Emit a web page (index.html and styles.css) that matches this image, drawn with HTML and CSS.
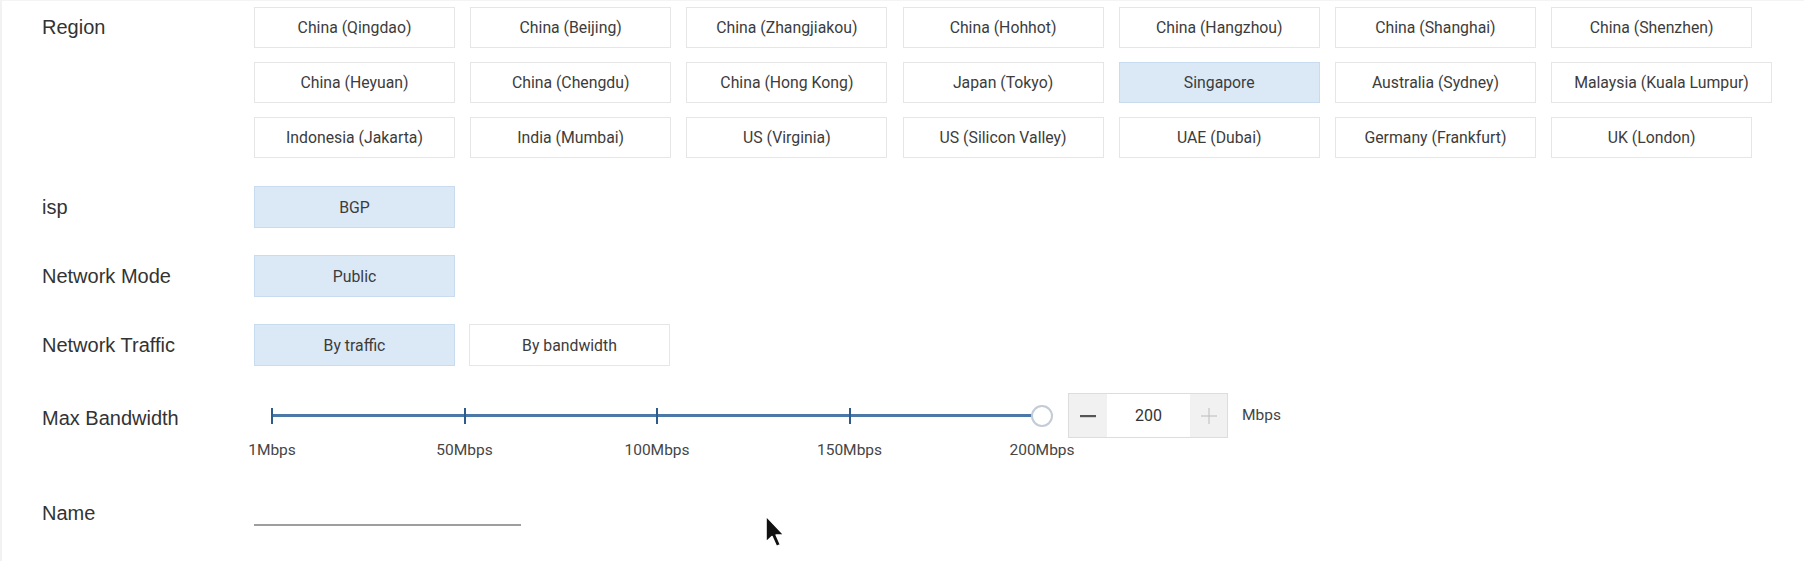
FILE: index.html
```html
<!DOCTYPE html>
<html>
<head>
<meta charset="utf-8">
<link rel="stylesheet" href="styles.css">
</head>
<body>
<div class="page">
  <div class="row row-region">
    <div class="label">Region</div>
    <div class="region-grid">
      <button class="opt">China (Qingdao)</button>
      <button class="opt">China (Beijing)</button>
      <button class="opt">China (Zhangjiakou)</button>
      <button class="opt">China (Hohhot)</button>
      <button class="opt">China (Hangzhou)</button>
      <button class="opt">China (Shanghai)</button>
      <button class="opt">China (Shenzhen)</button>
      <button class="opt">China (Heyuan)</button>
      <button class="opt">China (Chengdu)</button>
      <button class="opt">China (Hong Kong)</button>
      <button class="opt">Japan (Tokyo)</button>
      <button class="opt sel">Singapore</button>
      <button class="opt">Australia (Sydney)</button>
      <button class="opt">Malaysia (Kuala Lumpur)</button>
      <button class="opt">Indonesia (Jakarta)</button>
      <button class="opt">India (Mumbai)</button>
      <button class="opt">US (Virginia)</button>
      <button class="opt">US (Silicon Valley)</button>
      <button class="opt">UAE (Dubai)</button>
      <button class="opt">Germany (Frankfurt)</button>
      <button class="opt">UK (London)</button>
    </div>
  </div>

  <div class="row row-single row-isp">
    <div class="label label-tall">isp</div>
    <div class="opts"><button class="opt opt-tall sel">BGP</button></div>
  </div>

  <div class="row row-single">
    <div class="label label-tall">Network Mode</div>
    <div class="opts"><button class="opt opt-tall sel">Public</button></div>
  </div>

  <div class="row row-single">
    <div class="label label-tall">Network Traffic</div>
    <div class="opts">
      <button class="opt opt-tall sel">By traffic</button>
      <button class="opt opt-tall">By bandwidth</button>
    </div>
  </div>

  <div class="row row-bw">
    <div class="label label-bw">Max Bandwidth</div>
    <div class="bw">
      <div class="slider">
        <div class="slider-bar">
          <div class="tick"><span class="mark"></span></div>
          <div class="tick"><span class="mark"></span></div>
          <div class="tick"><span class="mark"></span></div>
          <div class="tick"><span class="mark"></span></div>
          <div class="tick"><span class="handle"></span></div>
        </div>
        <div class="slider-labels">
          <div class="tick"><span class="tlabel">1Mbps</span></div>
          <div class="tick"><span class="tlabel">50Mbps</span></div>
          <div class="tick"><span class="tlabel">100Mbps</span></div>
          <div class="tick"><span class="tlabel">150Mbps</span></div>
          <div class="tick"><span class="tlabel">200Mbps</span></div>
        </div>
      </div>
      <div class="stepper">
        <div class="step-btn step-minus">
          <svg width="18" height="18" viewBox="0 0 18 18"><rect x="1" y="8" width="16" height="2.2" fill="#555"/></svg>
        </div>
        <div class="step-val">200</div>
        <div class="step-btn step-plus">
          <svg width="18" height="18" viewBox="0 0 18 18"><rect x="1" y="8.4" width="16" height="1.2" fill="#c4c4c4"/><rect x="8.4" y="1" width="1.2" height="16" fill="#c4c4c4"/></svg>
        </div>
      </div>
      <span class="unit">Mbps</span>
    </div>
  </div>

  <div class="row row-name">
    <div class="label label-name">Name</div>
    <div class="name-input"></div>
  </div>

  <svg class="cursor" width="22" height="34" viewBox="0 0 22 34">
    <path d="M2 1 L2 27 L8 21.5 L12.5 31.5 L16.5 29.8 L12.2 20 L20 20 Z" fill="#111" stroke="#fff" stroke-width="1.6" stroke-linejoin="round"/>
  </svg>
</div>
</body>
</html>
```

FILE: styles.css
```css
html, body {
  margin: 0;
  padding: 0;
  background: #ffffff;
}

body {
  font-family: Roboto, "Liberation Sans", sans-serif;
  color: #333333;
}

.page {
  position: relative;
  box-sizing: border-box;
  width: 1804px;
  height: 561px;
  overflow: hidden;
  padding: 6px 0 0 40px;
  border-left: 2px solid #f2f2f2;
  border-top: 1px solid #f4f4f4;
}

.row {
  display: flex;
  align-items: flex-start;
}

.label {
  width: 212px;
  flex: none;
  font-family: "Liberation Sans", Arial, sans-serif;
  font-size: 20px;
  color: #333333;
  line-height: 41px;
  white-space: nowrap;
}

.label-tall {
  line-height: 42px;
}

.region-grid {
  display: grid;
  grid-template-columns: repeat(7, 201px);
  column-gap: 15.2px;
  row-gap: 14px;
}

.opt {
  box-sizing: border-box;
  justify-self: start;
  min-width: 201px;
  height: 41px;
  padding: 0 22px;
  margin: 0;
  border: 1px solid #e6e6e6;
  background: #ffffff;
  font-family: Roboto, "Liberation Sans", sans-serif;
  font-size: 15.8px;
  color: #3c3c3c;
  white-space: nowrap;
  text-align: center;
  cursor: pointer;
}

.opt-tall {
  height: 42px;
}

.opt.sel {
  background: #dbe9f7;
  border-color: #c9dbee;
}

.opts {
  display: flex;
  gap: 14px;
}

.row-isp {
  margin-top: 29px;
}

.row-single {
  margin-top: 27px;
}

.row-isp.row-single {
  margin-top: 28px;
}

/* bandwidth */
.row-bw {
  margin-top: 27px;
}

.label-bw {
  line-height: 50px;
}

.bw {
  display: flex;
  align-items: flex-start;
}

.slider {
  width: 770px;
  margin-left: 18px;
}

.slider-bar {
  height: 45px;
  display: flex;
  align-items: center;
  justify-content: space-between;
  background: linear-gradient(#4b78a8, #4b78a8) center / 100% 3px no-repeat;
}

.tick {
  width: 0;
  display: flex;
  justify-content: center;
  align-items: center;
}

.mark {
  flex: none;
  width: 2px;
  height: 16px;
  background: #2d5b8d;
}

.handle {
  flex: none;
  box-sizing: border-box;
  width: 22px;
  height: 22px;
  border-radius: 50%;
  border: 2px solid #c3cbd6;
  background: #ffffff;
}

.slider-labels {
  display: flex;
  justify-content: space-between;
  margin-top: 3px;
}

.tlabel {
  flex: none;
  font-family: Roboto, "Liberation Sans", sans-serif;
  font-size: 15.5px;
  line-height: 18px;
  color: #454545;
  white-space: nowrap;
}

.stepper {
  display: flex;
  box-sizing: border-box;
  height: 45px;
  width: 160px;
  margin-left: 26px;
  border: 1px solid #dddddd;
}

.step-btn {
  width: 39px;
  background: #f1f1f1;
  display: flex;
  align-items: center;
  justify-content: center;
}

.step-minus {
  width: 38px;
}

.step-plus {
  width: 37px;
}

.step-val {
  flex: 1;
  background: #ffffff;
  display: flex;
  align-items: center;
  justify-content: center;
  font-size: 16px;
  color: #333333;
}

.unit {
  margin-left: 14px;
  line-height: 45px;
  font-size: 15.5px;
  color: #444444;
}

/* name */
.row-name {
  margin-top: 42px;
}

.label-name {
  line-height: 24px;
}

.name-input {
  width: 267px;
  height: 23px;
  border-bottom: 2px solid #9e9e9e;
}

.cursor {
  position: absolute;
  left: 762px;
  top: 514px;
}
```
